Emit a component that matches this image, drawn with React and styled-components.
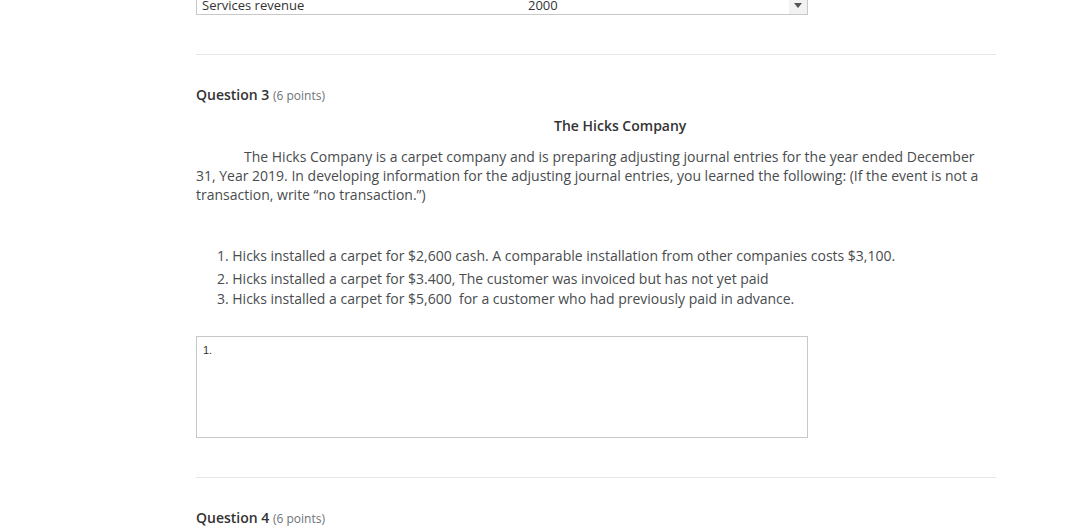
import styled, { createGlobalStyle } from "styled-components";

const GlobalStyle = createGlobalStyle`
  body {
    margin: 0;
    background: #ffffff;
    font-family: "Open Sans", "Liberation Sans", sans-serif;
    color: #494c4e;
  }
`;

function App() {
  return (
    <>
      <GlobalStyle />
      <Page>
        <SelectBox>
          <SelectLabel>Services revenue</SelectLabel>
          <SelectValue>2000</SelectValue>
          <SelectArrow>
            <svg width="8" height="5" viewBox="0 0 8 5">
              <path d="M0 0 L8 0 L4 5 Z" fill="#555" />
            </svg>
          </SelectArrow>
        </SelectBox>

        <Divider $top={39} />

        <QuestionTitle>
          Question 3 <Points>(6 points)</Points>
        </QuestionTitle>

        <CompanyName>The Hicks Company</CompanyName>

        <Paragraph>
          The Hicks Company is a carpet company and is preparing adjusting journal entries for the year ended December
          31, Year 2019. In developing information for the adjusting journal entries, you learned the following: (If the event is not a
          transaction, write “no transaction.”)
        </Paragraph>

        <List>
          <Item $gap={5}>1. Hicks installed a carpet for $2,600 cash. A comparable installation from other companies costs $3,100.</Item>
          <Item $gap={2}>2. Hicks installed a carpet for $3.400, The customer was invoiced but has not yet paid</Item>
          <Item $gap={0}>3. Hicks installed a carpet for $5,600&nbsp; for a customer who had previously paid in advance.</Item>
        </List>

        <AnswerBox defaultValue="1." />

        <Divider $top={39} />

        <QuestionTitle>
          Question 4 <Points>(6 points)</Points>
        </QuestionTitle>
      </Page>
    </>
  );
}

export default App;

const Page = styled.div`
  width: 800px;
  margin-left: 196px;
  display: flex;
  flex-direction: column;
`;

const SelectBox = styled.div`
  width: 612px;
  height: 23px;
  margin-top: -8px;
  box-sizing: border-box;
  border: 1px solid #c8c8c8;
  display: flex;
  align-items: center;
  font-size: 13px;
  color: #333;
`;

const SelectLabel = styled.span`
  padding-left: 5px;
  width: 326px;
  padding-top: 2px;
`;

const SelectValue = styled.span`
  flex: 1;
  padding-top: 2px;
`;

const SelectArrow = styled.span`
  width: 18px;
  height: 100%;
  background: #f2f2f2;
  display: flex;
  align-items: flex-end;
  justify-content: center;
  padding-bottom: 6px;
  box-sizing: border-box;
`;

const Divider = styled.hr`
  width: 800px;
  margin: ${(p) => p.$top}px 0 0 0;
  border: none;
  border-top: 1px solid #e6e6e6;
  height: 0;
`;

const QuestionTitle = styled.h2`
  margin: 31px 0 0 0;
  font-size: 14px;
  font-weight: 600;
  color: #333;
  line-height: 18px;
`;

const Points = styled.span`
  font-size: 12px;
  font-weight: 400;
  color: #6e7376;
`;

const CompanyName = styled.div`
  margin-top: 11px;
  padding-left: 358px;
  font-size: 14px;
  font-weight: 600;
  color: #333;
  line-height: 19px;
`;

const Paragraph = styled.p`
  margin: 12px 0 0 0;
  font-size: 14px;
  line-height: 19px;
  text-indent: 48px;
  color: #494c4e;
`;

const List = styled.div`
  margin-top: 43px;
  padding-left: 21px;
  display: flex;
  flex-direction: column;
  font-size: 14px;
  color: #494c4e;
  line-height: 18px;
`;

const Item = styled.div`
  margin-bottom: ${(p) => p.$gap}px;
  letter-spacing: -0.01px;
`;

const AnswerBox = styled.textarea`
  margin-top: 28px;
  width: 612px;
  height: 102px;
  box-sizing: border-box;
  border: 1px solid #c8c8c8;
  padding: 7px 6px;
  font-family: "Liberation Sans", sans-serif;
  font-size: 11px;
  color: #333;
  resize: none;
  outline: none;
`;
